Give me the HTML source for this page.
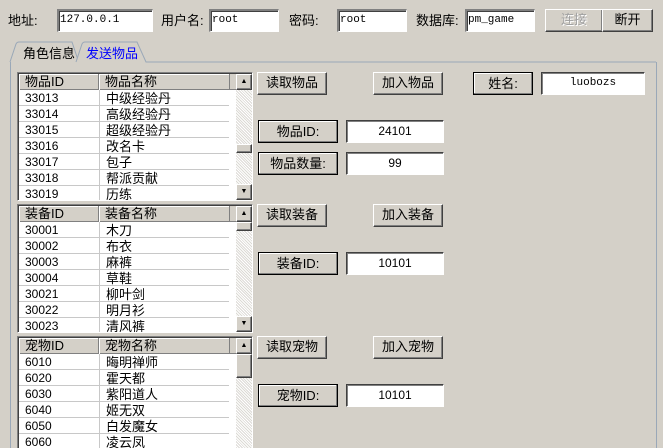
<!DOCTYPE html>
<html><head><meta charset="utf-8"><style>
*{box-sizing:border-box;margin:0;padding:0}
html,body{width:663px;height:448px;overflow:hidden}
body{background:#d4d0c8;font-family:"Liberation Sans","Noto Sans CJK SC","WenQuanYi Zen Hei",sans-serif;font-size:12px;color:#000;position:relative}
.a{position:absolute}
.lbl{position:absolute;font-size:13px;line-height:16px}
.inp{position:absolute;background:#fff;border-top:2px solid #808080;border-left:2px solid #808080;border-right:1px solid #fff;border-bottom:1px solid #fff;box-shadow:inset 1px 1px 0 #404040;font-family:"Liberation Mono",monospace;font-size:11px;line-height:19px;padding-left:1px;height:23px}
.btn{position:absolute;background:#d4d0c8;border-top:1px solid #fff;border-left:1px solid #fff;border-right:1px solid #404040;border-bottom:1px solid #404040;box-shadow:inset -1px -1px 0 #808080;text-align:center;font-size:13px;line-height:20px;height:23px}
.box{position:absolute;border:1px solid #000;box-shadow:inset -1px -1px 0 #808080,inset 1px 1px 0 #fff;text-align:center;font-size:13px;line-height:21px;height:23px}
.val{position:absolute;background:#fff;border-top:1px solid #404040;border-left:1px solid #404040;border-right:1px solid #fff;border-bottom:1px solid #fff;box-shadow:inset 1px 1px 0 #808080;text-align:center;font-size:12px;line-height:21px;height:23px}
.list{position:absolute;left:17px;width:236px;background:#fff;border-top:1px solid #808080;border-left:1px solid #808080;border-right:1px solid #fff;border-bottom:1px solid #fff;box-shadow:inset 1px 1px 0 #404040;overflow:hidden}
.hd{position:absolute;left:1px;top:1px;height:16px;width:218px;background:#d4d0c8;font-size:13px;line-height:16px;border-bottom:1px solid #808080}
.hd span{position:absolute;top:0;height:16px;padding-left:6px;border-right:1px solid #808080;box-shadow:inset 1px 1px 0 #fff}
.row{position:absolute;left:1px;width:210px;height:16px;border-bottom:1px solid #c8c8c8;font-size:12px;line-height:17px}
.row span{position:absolute;top:0;padding-left:6px}
.row .c2{left:80px;border-left:1px solid #c8c8c8;height:16px;font-size:13px}
.sb{position:absolute;right:0;top:1px;width:16px;bottom:0;background-color:#ecebe8;background-image:repeating-linear-gradient(45deg,#fff 0 1px,#dcdad5 1px 2px)}
.sbb{position:absolute;left:0;width:16px;height:16px;background:#d4d0c8;border-top:1px solid #fff;border-left:1px solid #fff;border-right:1px solid #404040;border-bottom:1px solid #404040;box-shadow:inset -1px -1px 0 #808080;font-size:7px;line-height:13px;text-align:center}
</style></head><body>

<div class="lbl" style="left:8px;top:13px">地址:</div>
<div class="inp" style="left:57px;top:9px;width:96px">127.0.0.1</div>
<div class="lbl" style="left:161px;top:13px">用户名:</div>
<div class="inp" style="left:209px;top:9px;width:70px">root</div>
<div class="lbl" style="left:289px;top:13px">密码:</div>
<div class="inp" style="left:337px;top:9px;width:70px">root</div>
<div class="lbl" style="left:416px;top:13px">数据库:</div>
<div class="inp" style="left:465px;top:9px;width:70px">pm_game</div>
<div class="btn" style="left:545px;top:9px;width:58px;color:#a0a0a0;text-shadow:1px 1px 0 #fff">连接</div>
<div class="btn" style="left:602px;top:9px;width:51px">断开</div>

<svg class="a" style="left:0;top:40px" width="663" height="24">
<path d="M10 22 L16 4 Q17 2 19 2 L72 2 L78 20" fill="none" stroke="#9aa8b8"/>
<path d="M76 22 L82 4 Q83 2 85 2 L137 2 L146 22 L656 22" fill="#d4d0c8" stroke="#9aa8b8"/>
</svg>
<div class="lbl" style="left:23px;top:46px">角色信息</div>
<div class="lbl" style="left:86px;top:46px;color:#0000ff">发送物品</div>
<div class="a" style="left:10px;top:62px;width:647px;height:390px;border-left:1px solid #9aa8b8;border-right:1px solid #9aa8b8"></div>

<div class="list" style="top:72px;height:129px">
<div class="hd"><span style="left:0;width:80px">物品ID</span><span style="left:80px;width:131px">物品名称</span></div>
<div class="row" style="top:17px"><span>33013</span><span class="c2">中级经验丹</span></div>
<div class="row" style="top:33px"><span>33014</span><span class="c2">高级经验丹</span></div>
<div class="row" style="top:49px"><span>33015</span><span class="c2">超级经验丹</span></div>
<div class="row" style="top:65px"><span>33016</span><span class="c2">改名卡</span></div>
<div class="row" style="top:81px"><span>33017</span><span class="c2">包子</span></div>
<div class="row" style="top:97px"><span>33018</span><span class="c2">帮派贡献</span></div>
<div class="row" style="top:113px"><span>33019</span><span class="c2">历练</span></div>
<div class="sb"><div class="sbb" style="top:0">▲</div><div class="sbb" style="top:70px;height:9px"></div><div class="sbb" style="bottom:0">▼</div></div>
</div>

<div class="list" style="top:204px;height:129px">
<div class="hd"><span style="left:0;width:80px">装备ID</span><span style="left:80px;width:131px">装备名称</span></div>
<div class="row" style="top:17px"><span>30001</span><span class="c2">木刀</span></div>
<div class="row" style="top:33px"><span>30002</span><span class="c2">布衣</span></div>
<div class="row" style="top:49px"><span>30003</span><span class="c2">麻裤</span></div>
<div class="row" style="top:65px"><span>30004</span><span class="c2">草鞋</span></div>
<div class="row" style="top:81px"><span>30021</span><span class="c2">柳叶剑</span></div>
<div class="row" style="top:97px"><span>30022</span><span class="c2">明月衫</span></div>
<div class="row" style="top:113px"><span>30023</span><span class="c2">清风裤</span></div>
<div class="sb"><div class="sbb" style="top:0">▲</div><div class="sbb" style="top:16px;height:9px"></div><div class="sbb" style="bottom:0">▼</div></div>
</div>

<div class="list" style="top:336px;height:120px">
<div class="hd"><span style="left:0;width:80px">宠物ID</span><span style="left:80px;width:131px">宠物名称</span></div>
<div class="row" style="top:17px"><span>6010</span><span class="c2">晦明禅师</span></div>
<div class="row" style="top:33px"><span>6020</span><span class="c2">霍天都</span></div>
<div class="row" style="top:49px"><span>6030</span><span class="c2">紫阳道人</span></div>
<div class="row" style="top:65px"><span>6040</span><span class="c2">姬无双</span></div>
<div class="row" style="top:81px"><span>6050</span><span class="c2">白发魔女</span></div>
<div class="row" style="top:97px"><span>6060</span><span class="c2">凌云凤</span></div>
<div class="sb"><div class="sbb" style="top:0">▲</div><div class="sbb" style="top:16px;height:24px"></div></div>
</div>

<div class="btn" style="left:257px;top:72px;width:70px">读取物品</div>
<div class="btn" style="left:373px;top:72px;width:70px">加入物品</div>
<div class="box" style="left:473px;top:72px;width:60px">姓名:</div>
<div class="val" style="left:541px;top:72px;width:104px;font-family:'Liberation Mono',monospace;font-size:11px">luobozs</div>

<div class="box" style="left:258px;top:120px;width:80px">物品ID:</div>
<div class="val" style="left:346px;top:120px;width:98px">24101</div>
<div class="box" style="left:258px;top:152px;width:80px">物品数量:</div>
<div class="val" style="left:346px;top:152px;width:98px">99</div>

<div class="btn" style="left:257px;top:204px;width:70px">读取装备</div>
<div class="btn" style="left:373px;top:204px;width:70px">加入装备</div>
<div class="box" style="left:258px;top:252px;width:80px">装备ID:</div>
<div class="val" style="left:346px;top:252px;width:98px">10101</div>

<div class="btn" style="left:257px;top:336px;width:70px">读取宠物</div>
<div class="btn" style="left:373px;top:336px;width:70px">加入宠物</div>
<div class="box" style="left:258px;top:384px;width:80px">宠物ID:</div>
<div class="val" style="left:346px;top:384px;width:98px">10101</div>
</body></html>
